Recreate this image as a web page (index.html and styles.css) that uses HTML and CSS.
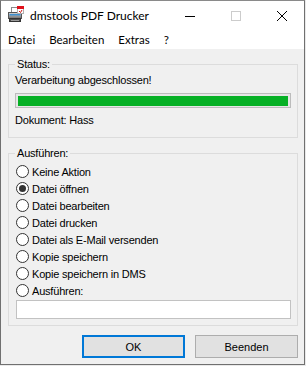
FILE: index.html
```html
<!DOCTYPE html>
<html lang="de">
<head>
<meta charset="utf-8">
<title>dmstools PDF Drucker</title>
<link rel="stylesheet" href="styles.css">
</head>
<body>
<div class="window">
  <div class="titlebar">
    <svg class="app-icon" width="16" height="17" viewBox="0 0 16 17">
      <defs>
        <linearGradient id="pbody" x1="0" y1="0" x2="0" y2="1">
          <stop offset="0" stop-color="#d8d8d8"/>
          <stop offset="1" stop-color="#707070"/>
        </linearGradient>
      </defs>
      <rect x="3.5" y="1.5" width="7" height="6" fill="#ffffff" stroke="#8a8a8a"/>
      <rect x="0.5" y="6.5" width="13" height="6" fill="url(#pbody)" stroke="#555"/>
      <rect x="1.5" y="8" width="11" height="1.5" fill="#3f8fcf"/>
      <rect x="1.5" y="12.5" width="11" height="3" fill="#505050" stroke="#333"/>
      <rect x="3" y="14" width="8" height="1" fill="#9a9a9a"/>
      <rect x="9.5" y="0.5" width="6" height="7" fill="#ffffff" stroke="#b0b0b0"/>
      <rect x="9" y="0" width="7" height="3" fill="#e0101a"/>
      <path d="M11 5 L12.5 6.5 L14 4" stroke="#d01010" stroke-width="1" fill="none"/>
    </svg>
    <span class="title">dmstools PDF Drucker</span>
    <div class="controls">
      <span class="ctl">
        <svg width="10" height="10" viewBox="0 0 10 10"><path d="M0 5.5 H10" stroke="#000" stroke-width="1"/></svg>
      </span>
      <span class="ctl">
        <svg width="10" height="10" viewBox="0 0 10 10"><rect x="0.5" y="0.5" width="9" height="9" fill="none" stroke="#cccccc" stroke-width="1"/></svg>
      </span>
      <span class="ctl">
        <svg width="10" height="10" viewBox="0 0 10 10"><path d="M0 0 L10 10 M10 0 L0 10" stroke="#000" stroke-width="1"/></svg>
      </span>
    </div>
  </div>
  <div class="menubar">
    <span class="menu-item">Datei</span>
    <span class="menu-item">Bearbeiten</span>
    <span class="menu-item">Extras</span>
    <span class="menu-item">?</span>
  </div>
  <div class="client">
    <fieldset class="group status">
      <legend class="legend">Status:</legend>
      <div class="line first">Verarbeitung abgeschlossen!</div>
      <div class="progress"><div class="progress-fill"></div></div>
      <div class="line doc">Dokument: Hass</div>
    </fieldset>
    <fieldset class="group actions">
      <legend class="legend">Ausführen:</legend>
      <div class="radios">
        <div class="radio"><span class="radio-box"></span>Keine Aktion</div>
        <div class="radio"><span class="radio-box checked"></span>Datei öffnen</div>
        <div class="radio"><span class="radio-box"></span>Datei bearbeiten</div>
        <div class="radio"><span class="radio-box"></span>Datei drucken</div>
        <div class="radio"><span class="radio-box"></span>Datei als E-Mail versenden</div>
        <div class="radio"><span class="radio-box"></span>Kopie speichern</div>
        <div class="radio"><span class="radio-box"></span>Kopie speichern in DMS</div>
        <div class="radio"><span class="radio-box"></span>Ausführen:</div>
      </div>
      <div class="textbox"></div>
    </fieldset>
    <div class="buttons">
      <div class="btn default">OK</div>
      <div class="btn">Beenden</div>
    </div>
  </div>
</div>
</body>
</html>
```
FILE: styles.css
```css
html, body {
  margin: 0;
  padding: 0;
}
body {
  width: 306px;
  height: 366px;
  background: #e9e9e9;
  overflow: hidden;
}
.window {
  box-sizing: border-box;
  width: 305px;
  height: 365px;
  border: 1px solid #707070;
  border-top-color: #8a8a8a;
  background: #f0f0f0;
  display: flex;
  flex-direction: column;
}
.titlebar {
  height: 29px;
  background: #ffffff;
  display: flex;
  align-items: center;
  font-family: Lato, "Noto Sans", sans-serif;
  font-size: 12px;
  color: #000;
}
.app-icon {
  margin-left: 7px;
  margin-top: -2px;
  flex: none;
}
.title {
  margin-left: 6px;
  letter-spacing: 0;
}
.controls {
  margin-left: auto;
  display: flex;
  height: 29px;
  margin-right: -1px;
}
.ctl {
  width: 46px;
  height: 29px;
  display: flex;
  align-items: center;
  justify-content: center;
}
.ctl svg {
  display: block;
}
.menubar {
  height: 19px;
  background: #ffffff;
  display: flex;
  font-family: Lato, "Noto Sans", sans-serif;
  font-size: 11.5px;
  line-height: 19px;
  color: #000;
}
.menu-item {
  padding: 0 7px;
}
.client {
  flex: 1;
  padding: 0 6px 0 7px;
  font-family: "Liberation Sans", Arial, sans-serif;
  font-size: 11px;
  letter-spacing: -0.2px;
  color: #000;
}
.group {
  margin: 9px 0 0;
  padding: 0 6px 10px;
  border: 1px solid #dcdcdc;
  min-width: 0;
}
.legend {
  padding: 0 2px;
  line-height: 13px;
}
.line {
  line-height: 13px;
  height: 13px;
}
.line.first {
  margin-top: 3px;
}
.progress {
  box-sizing: border-box;
  margin-top: 6px;
  height: 15px;
  border: 1px solid #bcbcbc;
  background: #e6e6e6;
  padding: 2px 2px 1px 2px;
}
.progress-fill {
  height: 100%;
  background: #06b025;
}
.line.doc {
  margin-top: 6px;
}
.actions {
  padding-bottom: 6px;
}
.radios {
  margin-top: 3px;
  display: flex;
  flex-direction: column;
}
.radio {
  height: 17px;
  display: flex;
  align-items: center;
  gap: 3px;
  padding-left: 1px;
  white-space: nowrap;
}
.radio-box {
  box-sizing: border-box;
  width: 13px;
  height: 13px;
  border: 1px solid #333333;
  border-radius: 50%;
  background: #ffffff;
  flex: none;
  display: flex;
  align-items: center;
  justify-content: center;
}
.radio-box.checked::after {
  content: "";
  width: 7px;
  height: 7px;
  border-radius: 50%;
  background: #333333;
}
.textbox {
  box-sizing: border-box;
  margin: 1px 0 0 1px;
  height: 19px;
  background: #ffffff;
  border: 1px solid #c2c2c2;
}
.buttons {
  margin-top: 9px;
  display: flex;
  justify-content: flex-end;
  gap: 10px;
}
.btn {
  box-sizing: border-box;
  width: 103px;
  height: 23px;
  background: #e1e1e1;
  border: 1px solid #adadad;
  display: flex;
  align-items: center;
  justify-content: center;
  letter-spacing: 0;
}
.btn.default {
  border: 2px solid #0078d7;
}
```
